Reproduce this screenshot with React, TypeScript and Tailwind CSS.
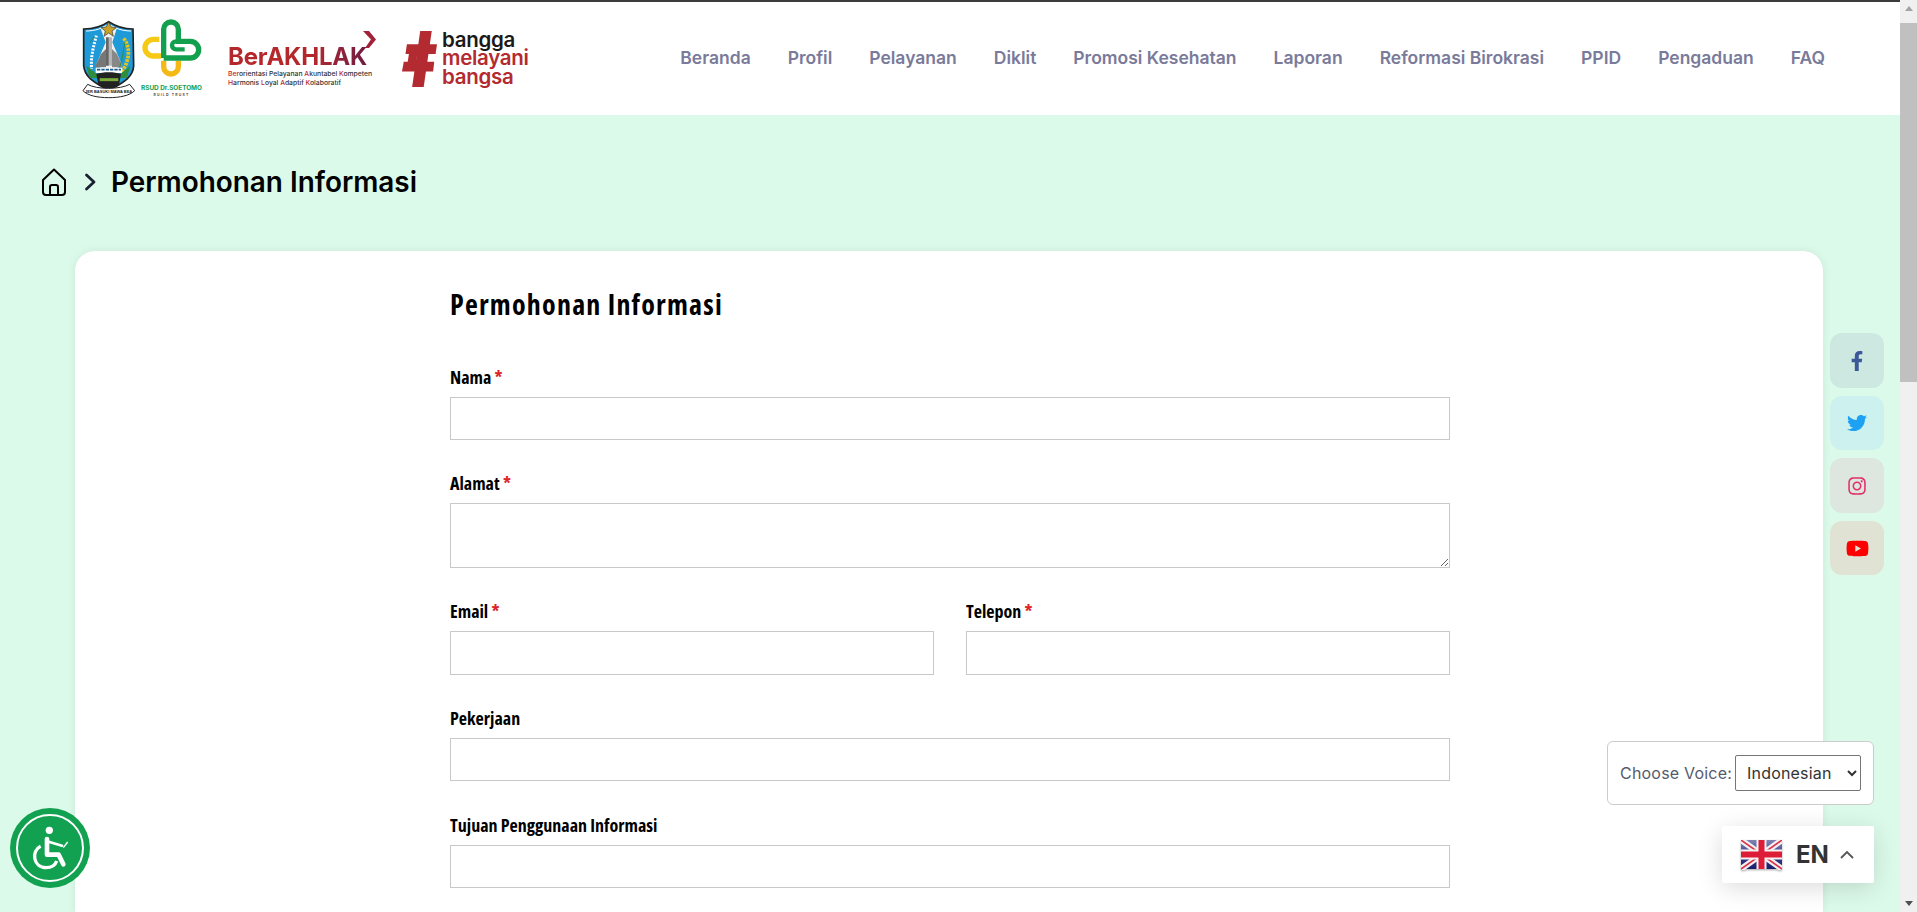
import React from "react";
import { FaFacebookF, FaTwitter, FaInstagram, FaYoutube } from "react-icons/fa";

const nav = ["Beranda", "Profil", "Pelayanan", "Diklit", "Promosi Kesehatan", "Laporan", "Reformasi Birokrasi", "PPID", "Pengaduan", "FAQ"];

function Crest() {
  return (
    <svg width="54" height="80" viewBox="8 10 160 240" className="shrink-0">
      <path d="M12 40C40 40 70 30 87 18C105 30 135 40 160 40L162 150C160 190 120 205 87 225C55 205 15 190 12 150Z" fill="#1f9ad8" stroke="#222" strokeWidth="5" />
      <path d="M19 46C44 46 70 38 87 26C104 38 130 46 154 46" fill="none" stroke="#fff" strokeWidth="3" />
      <path d="M62 36L87 26L112 36L98 80L128 150L88 165L48 150L78 80Z" fill="#f1f1f1" />
      <path d="M87 18L94 34L110 36L97 46L101 62L87 52L73 62L77 46L64 36L80 34Z" fill="#c9a227" stroke="#333" strokeWidth="2" />
      <path d="M79 65H97V150H79Z" fill="#b5b5b5" />
      <path d="M79 65H87V150H79Z" fill="#666" />
      <path d="M64 115L79 100V155H45Z" fill="#777" />
      <path d="M112 115L97 100V155H130Z" fill="#888" />
      <path d="M50 60C44 85 32 120 36 160" stroke="#fff" strokeWidth="9" strokeDasharray="6 4" fill="none" />
      <path d="M32 80L44 62" stroke="#2f8d3c" strokeWidth="3" />
      <path d="M132 68C152 95 152 130 125 172" stroke="#e6c51d" strokeWidth="11" strokeDasharray="8 3" fill="none" />
      <path d="M136 80C130 105 130 130 118 160" stroke="#2f8d3c" strokeWidth="3" fill="none" />
      <path d="M48 156H128V172H48Z" fill="#fff" />
      <path d="M52 162H124" stroke="#1d5d90" strokeWidth="5" strokeDasharray="10 3" />
      <path d="M20 150L52 175V188L30 186Z" fill="#2f8d3c" />
      <path d="M152 150L122 175V188L142 186Z" fill="#2f8d3c" />
      <path d="M50 175C70 168 105 168 124 175L118 208L87 222L56 208Z" fill="#222" />
      <path d="M60 192H116" stroke="#7cab3b" strokeWidth="9" />
      <path d="M10 225L24 206C50 222 122 222 150 206L165 225C150 240 120 246 87 246C54 246 24 240 10 225Z" fill="#fff" stroke="#222" strokeWidth="3" />
      <text x="87" y="232" textAnchor="middle" fontSize="12" fontWeight="700" fill="#222" fontFamily="Liberation Sans, sans-serif">JER BASUKI MAWA BEA</text>
    </svg>
  );
}

function Soetomo() {
  return (
    <div className="ml-[5px] flex w-[61px] shrink-0 flex-col items-center">
      <svg width="60" height="58" viewBox="188 17 180 174">
        <path d="M240 78H222A25 25 0 0 0 222 128H245" fill="none" stroke="#f5c915" strokeWidth="16" />
        <path d="M253 142V160A22 22 0 0 0 297 160V142" fill="none" stroke="#f5b915" strokeWidth="16" />
        <path d="M253 134V48A22 22 0 0 1 297 48V84H333A25 25 0 0 1 333 134H253" fill="none" stroke="#12a04f" strokeWidth="16" />
        <path d="M297 84H290A12 12 0 0 0 290 108H316" fill="none" stroke="#12a04f" strokeWidth="13" />
      </svg>
      <span className="mt-[7px] whitespace-nowrap text-[6.4px] font-bold leading-[8px] text-[#12a04f]">RSUD Dr.SOETOMO</span>
      <span className="mt-[1px] whitespace-nowrap text-[3.5px] font-semibold leading-[5px] tracking-[1.2px] text-[#333]">BUILD TRUST</span>
    </div>
  );
}

function Red({ children }: { children: React.ReactNode }) {
  return <span className="text-[#c0272d]">{children}</span>;
}

function BerAkhlak() {
  return (
    <div className="relative ml-[26px] mt-[14px] flex w-[150px] shrink-0 flex-col">
      <span className="w-max whitespace-nowrap bg-linear-to-r from-[#b4282c] from-60% to-[#701b40] bg-clip-text text-[24px] font-bold leading-[24px] tracking-[-0.2px] text-transparent">BerAKHLAK</span>
      <svg width="14" height="17" viewBox="0 0 14 17" className="absolute left-[135px] top-[-14px]">
        <path d="M0 0H6L13 8.5L6 17H2L8 8.5Z" fill="#a2213a" />
      </svg>
      <span className="whitespace-nowrap text-[6.8px] font-medium leading-[9px] text-[#333]"><Red>Ber</Red>orientasi Pelayanan <Red>A</Red>kuntabel <Red>K</Red>ompeten</span>
      <span className="whitespace-nowrap text-[6.8px] font-medium leading-[9px] text-[#333]"><Red>H</Red>armonis <Red>L</Red>oyal <Red>A</Red>daptif <Red>K</Red>olaboratif</span>
    </div>
  );
}

function Bangga() {
  return (
    <div className="ml-[22px] flex shrink-0 items-center gap-[3px]">
      <svg width="39" height="56" viewBox="0 0 100 160">
        <path d="M52 0H85L62 160H29Z" fill="#b32b30" />
        <path d="M14 38H100L96 66H10Z" fill="#b32b30" />
        <path d="M5 88H92L89 116H0Z" fill="#b32b30" />
        <path d="M20 64H44L40 90H16Z" fill="#b32b30" />
      </svg>
      <div className="flex flex-col text-[20.5px] font-semibold leading-[18.5px] tracking-[-0.3px]">
        <span className="text-[#1a1a1a]">bangga</span>
        <span className="text-[#b32b30]">melayani</span>
        <span className="text-[#b32b30]">bangsa</span>
      </div>
    </div>
  );
}

function Label({ text, req }: { text: string; req?: boolean }) {
  return (
    <label className="mb-2 block h-6 text-[18px] font-bold leading-6 text-black [font-family:'Open_Sans',sans-serif] [font-stretch:75%]">
      {text}
      {req && <span className="text-[#dc2626]"> *</span>}
    </label>
  );
}

const inputCls = "block w-full border border-[#c8c8c8] bg-white";

function Flag() {
  return (
    <svg width="41" height="30" viewBox="0 0 41 30" className="shrink-0 drop-shadow-[0_1px_1px_rgba(0,0,0,0.35)]">
      <defs>
        <linearGradient id="flagBlue" x1="0" y1="0" x2="0" y2="1">
          <stop offset="0" stopColor="#8084b4" />
          <stop offset="0.5" stopColor="#3c4290" />
          <stop offset="1" stopColor="#1a1f6c" />
        </linearGradient>
      </defs>
      <rect width="41" height="29" fill="url(#flagBlue)" />
      <path d="M0 0L41 29M41 0L0 29" stroke="#f4f0f0" strokeWidth="6" />
      <path d="M0 0L41 29M41 0L0 29" stroke="#d9334a" strokeWidth="1.6" />
      <path d="M20.5 0V29M0 14.5H41" stroke="#f6f2f2" strokeWidth="10" />
      <path d="M20.5 0V29M0 14.5H41" stroke="#dd1c37" strokeWidth="6" />
    </svg>
  );
}

export default function App() {
  return (
    <div className="relative flex h-[912px] w-full overflow-hidden bg-[#dcfaea] [font-family:Inter,sans-serif]">
      <div className="flex min-w-0 flex-1 flex-col">
        <header className="flex h-[115px] shrink-0 items-center border-t-2 border-[#3c3c3c] bg-white pl-[82px] pr-[75px]">
          <Crest />
          <Soetomo />
          <BerAkhlak />
          <Bangga />
          <nav className="ml-auto flex items-center gap-[37px] text-[17.5px] font-semibold text-[#7a7a9a]">
            {nav.map((n) => (
              <span key={n} className="whitespace-nowrap">{n}</span>
            ))}
          </nav>
        </header>

        <div className="flex h-[136px] shrink-0 items-center pb-[2px] pl-[41px]">
          <svg width="26" height="28" viewBox="0 0 26 28" fill="none" stroke="#000" strokeWidth="2" strokeLinejoin="round" strokeLinecap="round">
            <path d="M2 12L13 1.5L24 12V24A3 3 0 0 1 21 27H5A3 3 0 0 1 2 24Z" />
            <path d="M9 27V19A2 2 0 0 1 11 17H15A2 2 0 0 1 17 19V27" />
          </svg>
          <svg width="13" height="18" viewBox="0 0 13 18" fill="none" stroke="#1a2030" strokeWidth="2.8" className="ml-[17px]" strokeLinecap="round" strokeLinejoin="round">
            <path d="M2.5 2L10 9L2.5 16" />
          </svg>
          <h1 className="ml-[14px] text-[27.9px] font-semibold leading-9 text-black">Permohonan Informasi</h1>
        </div>

        <main className="ml-[75px] mr-[77px] flex-1 rounded-t-[20px] bg-white pt-[33px] shadow-[0_0_8px_rgba(0,0,0,0.08)]">
          <form className="ml-[375px] w-[1000px]">
            <h2 className="mb-[41px] text-[28px] font-bold leading-10 tracking-[1.2px] text-black [font-family:'Open_Sans',sans-serif] [font-stretch:75%]">Permohonan Informasi</h2>
            <div className="mb-[31px]">
              <Label text="Nama" req />
              <input className={`${inputCls} h-[43px]`} />
            </div>
            <div className="mb-[31px]">
              <Label text="Alamat" req />
              <textarea className={`${inputCls} h-[65px]`} />
            </div>
            <div className="mb-[31px] grid grid-cols-2 gap-8">
              <div>
                <Label text="Email" req />
                <input className={`${inputCls} h-[44px]`} />
              </div>
              <div>
                <Label text="Telepon" req />
                <input className={`${inputCls} h-[44px]`} />
              </div>
            </div>
            <div className="mb-[32px]">
              <Label text="Pekerjaan" />
              <input className={`${inputCls} h-[43px]`} />
            </div>
            <div>
              <Label text="Tujuan Penggunaan Informasi" />
              <input className={`${inputCls} h-[43px]`} />
            </div>
          </form>
        </main>
      </div>

      <div className="flex w-[17px] shrink-0 flex-col bg-[#f0f0f0]">
        <div className="flex h-[17px] items-center justify-center">
          <div className="h-0 w-0 border-x-[4px] border-b-[5px] border-x-transparent border-b-[#a3a3a3]" />
        </div>
        <div className="mt-[6px] h-[359px] bg-[#c0c0c0]" />
        <div className="mt-auto flex h-[17px] items-center justify-center">
          <div className="h-0 w-0 border-x-[4px] border-t-[5px] border-x-transparent border-t-[#505050]" />
        </div>
      </div>

      <div className="absolute left-[1830px] top-[333px] flex flex-col gap-2">
        <div className="flex h-[55px] w-[54px] items-center justify-center rounded-xl bg-[#cde8e0] text-[#3b5998]"><FaFacebookF size={20} /></div>
        <div className="flex h-[54px] w-[54px] items-center justify-center rounded-xl bg-[#ccf1ee] text-[#1da1f2]"><FaTwitter size={20} /></div>
        <div className="flex h-[55px] w-[54px] items-center justify-center rounded-xl bg-[#dde6df] text-[#e1306c]"><FaInstagram size={20} /></div>
        <div className="flex h-[54px] w-[54px] items-center justify-center rounded-xl bg-[#e0e2d4] text-[#ff0000]"><FaYoutube size={23} /></div>
      </div>

      <div className="absolute left-[1607px] top-[741px] flex h-[64px] w-[267px] items-center gap-[3px] rounded-[6px] border border-[#cccccc] bg-white pl-[12px] text-[16px] tracking-[0.2px] text-[#555a6e]">
        <span className="whitespace-nowrap">Choose Voice:</span>
        <select className="h-[36px] w-[126px] rounded-[2px] border border-[#767676] bg-white pl-[7px] text-[16px] text-[#333]">
          <option>Indonesian</option>
        </select>
      </div>

      <div className="absolute left-[1722px] top-[826px] flex h-[57px] w-[152px] items-center rounded-[2px] bg-white pl-[19px] shadow-[0_5px_25px_rgba(0,0,0,0.14)]">
        <Flag />
        <span className="ml-[14px] text-[24px] font-bold leading-none text-[#333]">EN</span>
        <svg width="14" height="9" viewBox="0 0 14 9" fill="none" stroke="#555" strokeWidth="1.8" className="ml-[11px]">
          <path d="M1 8L7 2L13 8" />
        </svg>
      </div>

      <div className="absolute left-[10px] top-[808px] h-20 w-20 rounded-full bg-[#12a150]">
        <svg width="80" height="80" viewBox="30 53 240 240">
          <circle cx="150" cy="173" r="99" fill="none" stroke="#fff" strokeWidth="6" />
          <circle cx="148" cy="120" r="11" fill="#fff" />
          <path d="M141 146V193H176L190 222" fill="none" stroke="#fff" strokeWidth="14" strokeLinejoin="round" strokeLinecap="round" />
          <path d="M146 154L186 166" fill="none" stroke="#fff" strokeWidth="8" strokeLinecap="round" />
          <path d="M190 172L203 155" fill="none" stroke="#fff" strokeWidth="4" />
          <path d="M122 168C92 182 100 232 138 232C154 232 166 224 170 212" fill="none" stroke="#fff" strokeWidth="10" />
        </svg>
      </div>
    </div>
  );
}
